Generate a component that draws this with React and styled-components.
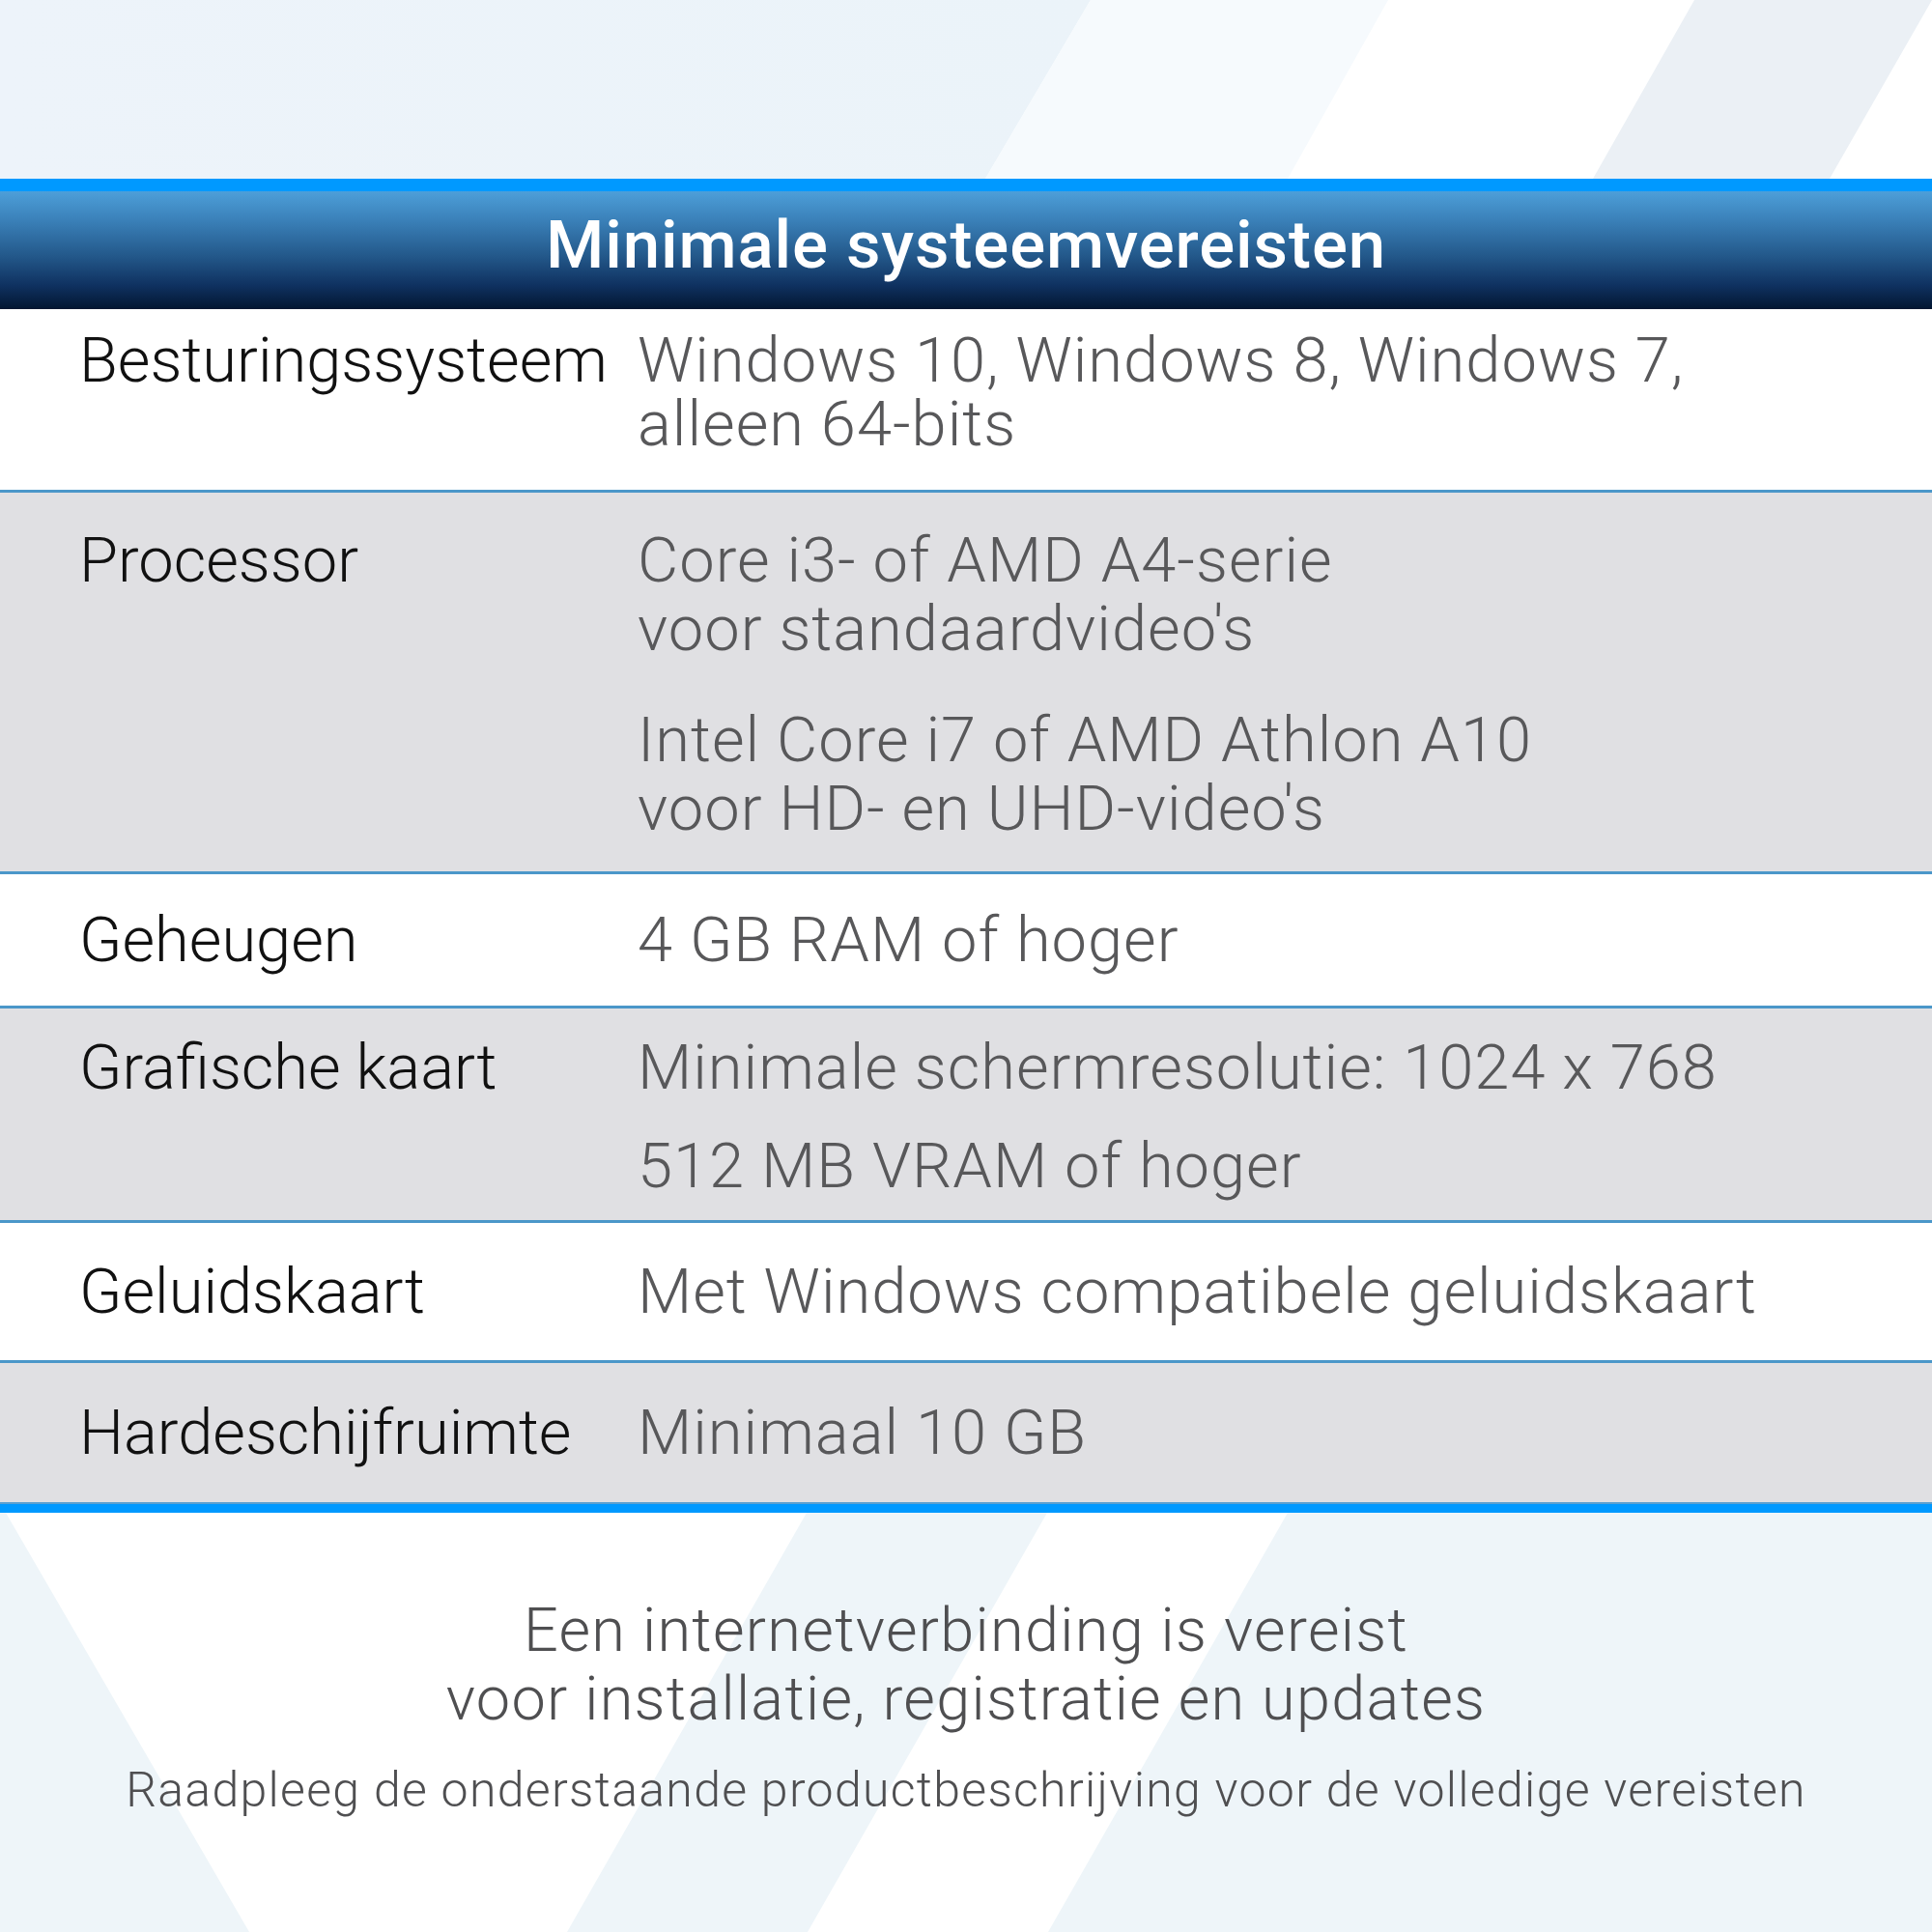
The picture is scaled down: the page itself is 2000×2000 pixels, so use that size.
import styled, { createGlobalStyle } from "styled-components";

const GlobalStyle = createGlobalStyle`
  html, body {
    margin: 0;
    padding: 0;
    background: #ffffff;
  }
  body {
    font-family: Roboto, "Liberation Sans", Arial, sans-serif;
  }
`;

const Page = styled.div`
  width: 2000px;
  height: 2000px;
  display: flex;
  flex-direction: column;
  overflow: hidden;
  background: #ffffff;
`;

const TopBand = styled.div`
  height: 185px;
  flex-shrink: 0;
  svg {
    display: block;
  }
`;

const Table = styled.section`
  display: flex;
  flex-direction: column;
  flex-shrink: 0;
`;

const Header = styled.header`
  box-sizing: border-box;
  height: 135px;
  border-top: 13px solid #0099ff;
  background: linear-gradient(
    180deg,
    #4d9fd9 0%,
    #3a80b8 25%,
    #23588a 55%,
    #0f3160 80%,
    #021631 100%
  );
  display: flex;
  align-items: center;
  justify-content: center;
  padding-bottom: 12px;
`;

const Title = styled.h1`
  margin: 0;
  font-size: 69px;
  font-weight: 500;
  color: #ffffff;
  letter-spacing: 0.9px;
  line-height: 1;
`;

const Row = styled.div`
  box-sizing: border-box;
  height: ${({ $h }) => $h}px;
  display: grid;
  grid-template-columns: 578px 1fr;
  align-content: center;
  align-items: start;
  padding: ${({ $pt }) => $pt || 0}px 40px ${({ $pb }) => $pb || 0}px 82px;
  background: ${({ $alt }) => ($alt ? "#e0e0e3" : "#ffffff")};
  border-top: ${({ $first }) => ($first ? "none" : "3px solid #4b97c9")};
  font-size: 65px;
  font-weight: 300;
  line-height: ${({ $lh }) => $lh || 70}px;
`;

const Label = styled.div`
  color: #111111;
  white-space: nowrap;
`;

const Value = styled.div`
  color: #58585a;
  letter-spacing: 1px;
`;

const Para = styled.div`
  margin-top: ${({ $gap }) => $gap || 0}px;
`;

const Line = styled.div`
  white-space: nowrap;
`;

const BottomRule = styled.div`
  height: 9px;
  border-top: 2px solid #5aa0d0;
  background: #0099ff;
`;

const Footer = styled.footer`
  flex: 1;
  position: relative;
  display: flex;
  flex-direction: column;
  align-items: center;
  padding-top: 86px;
  color: #4f4f51;
  font-weight: 300;
`;

const FooterArt = styled.svg`
  position: absolute;
  inset: 0;
  width: 100%;
  height: 100%;
  display: block;
`;

const Notice = styled.div`
  position: relative;
  font-size: 63px;
  line-height: 71px;
  letter-spacing: 1.3px;
  text-align: center;
`;

const Hint = styled.div`
  position: relative;
  margin-top: 29px;
  font-size: 50px;
  line-height: 60px;
  letter-spacing: 1.3px;
  text-align: center;
  white-space: nowrap;
`;

const rows = [
  {
    label: "Besturingssysteem",
    h: 187,
    lh: 66,
    pb: 16,
    groups: [["Windows 10, Windows 8, Windows 7,", "alleen 64-bits"]],
  },
  {
    label: "Processor",
    h: 395,
    lh: 71,
    pt: 5,
    alt: true,
    gap: 44,
    groups: [
      ["Core i3- of AMD A4-serie", "voor standaardvideo's"],
      ["Intel Core i7 of AMD Athlon A10", "voor HD- en UHD-video's"],
    ],
  },
  { label: "Geheugen", h: 139, groups: [["4 GB RAM of hoger"]] },
  {
    label: "Grafische kaart",
    h: 222,
    pt: 5,
    alt: true,
    gap: 32,
    groups: [["Minimale schermresolutie: 1024 x 768"], ["512 MB VRAM of hoger"]],
  },
  {
    label: "Geluidskaart",
    h: 145,
    groups: [["Met Windows compatibele geluidskaart"]],
  },
  {
    label: "Hardeschijfruimte",
    h: 147,
    alt: true,
    groups: [["Minimaal 10 GB"]],
  },
];

const TopStripes = () => (
  <svg width="2000" height="185" viewBox="0 0 2000 185" preserveAspectRatio="none">
    <defs>
      <linearGradient id="topBase" x1="0" y1="0" x2="1" y2="0">
        <stop offset="0" stopColor="#edf3fa" />
        <stop offset="1" stopColor="#ebf3f9" />
      </linearGradient>
    </defs>
    <rect width="2000" height="185" fill="#ffffff" />
    <polygon points="0,0 1129,0 1020,185 0,185" fill="url(#topBase)" />
    <polygon points="1129,0 1437,0 1333,185 1020,185" fill="#f6fafd" />
    <polygon points="1754,0 2000,0 1894,185 1649,185" fill="#ebf0f5" />
  </svg>
);

const App = () => {
  return (
    <>
      <GlobalStyle />
      <Page>
        <TopBand>
          <TopStripes />
        </TopBand>

        <Table>
          <Header>
            <Title>Minimale systeemvereisten</Title>
          </Header>
          {rows.map((row, i) => (
            <Row
              key={row.label}
              $h={row.h}
              $lh={row.lh}
              $pt={row.pt}
              $pb={row.pb}
              $alt={row.alt}
              $first={i === 0}
            >
              <Label>{row.label}</Label>
              <Value>
                {row.groups.map((lines, j) => (
                  <Para key={j} $gap={j > 0 ? row.gap : 0}>
                    {lines.map((line) => (
                      <Line key={line}>{line}</Line>
                    ))}
                  </Para>
                ))}
              </Value>
            </Row>
          ))}
          <BottomRule />
        </Table>

        <Footer>
          <FooterArt viewBox="0 0 2000 434" preserveAspectRatio="none">
            <rect width="2000" height="434" fill="#eef5f9" />
            <polygon points="6,0 835,0 587,434 258,434" fill="#ffffff" />
            <polygon points="1084,0 1333,0 1085,434 836,434" fill="#ffffff" />
          </FooterArt>
          <Notice>
            Een internetverbinding is vereist
            <br />
            voor installatie, registratie en updates
          </Notice>
          <Hint>Raadpleeg de onderstaande productbeschrijving voor de volledige vereisten</Hint>
        </Footer>
      </Page>
    </>
  );
};

export default App;
